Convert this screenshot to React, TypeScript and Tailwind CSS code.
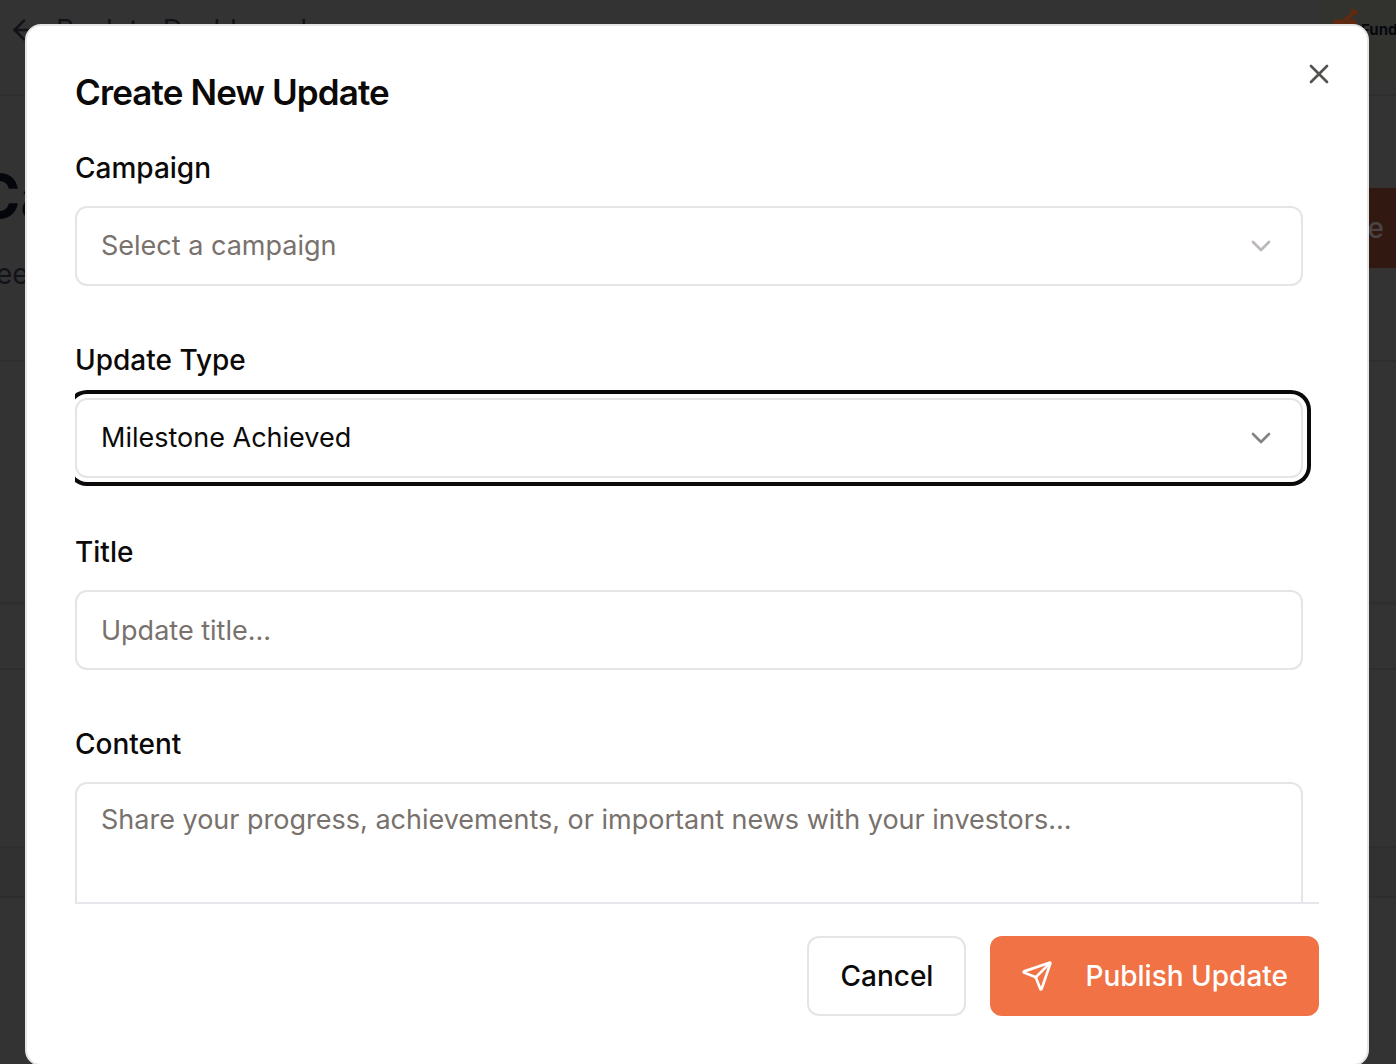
import { useState } from "react";
import type { ReactNode } from "react";
import { ArrowLeft, ChevronDown, Send, X } from "lucide-react";

const fieldClass =
  "w-full rounded-xl border-2 border-[#e5e5e5] bg-white px-6 text-[27px] leading-10 outline-none placeholder:text-[#78716c]";

function Field({ id, label, children }: { id: string; label: string; children: ReactNode }) {
  return (
    <div className="flex flex-col gap-4">
      <label htmlFor={id} className="text-[28px] leading-11 font-medium">
        {label}
      </label>
      {children}
    </div>
  );
}

function PageBehind() {
  return (
    <div aria-hidden="true" className="flex h-screen flex-col overflow-hidden bg-[#333333] text-[#111318]">
      <header className="flex h-24 shrink-0 items-start justify-between border-b-2 border-[#2e2e2e]">
        <div className="flex items-center gap-4 pt-2 pl-2 text-[28px] leading-11">
          <ArrowLeft size={32} />
          <span>Back to Dashboard</span>
        </div>
        <div className="flex h-20 w-[75px] items-start overflow-hidden bg-[#32322f] pt-2 pl-3">
          <svg width="28" height="28" viewBox="0 0 28 28" className="shrink-0" fill="#602a10">
            <path d="M18.5 1.2q1.6-1.4 3 0l3 2.4q1.4 1.6-.4 2.8-1.400.8-2.800.2L13 15l-4-3L18.500 4q-1-1.400 0-2.800z" />
            <path d="M0 13.500q0-2 2-2h7l4 4 4-4h6V24H0z" />
          </svg>
          <span className="text-[15px] leading-11 font-bold text-[#05070c]">Fundraise</span>
        </div>
      </header>
      <div className="flex h-[266px] shrink-0 items-start justify-between border-b-2 border-[#2e2e2e] pt-[68px]">
        <div className="-ml-6">
          <p className="text-[60px] leading-16 font-bold text-[#04060c]">Ca</p>
          <p className="pt-6 pl-5 text-[28px] leading-11">eep</p>
        </div>
        <div className="mt-6 flex h-20 w-40 items-center justify-end bg-[#311810] pr-3 text-[28px] font-medium text-[#484444]">
          Update
        </div>
      </div>
      <div className="h-[243px] shrink-0 border-b-4 border-[#2f2f2f]" />
      <div className="h-[65px] shrink-0 border-b-2 border-[#2e2e2e]" />
      <div className="h-[178px] shrink-0 border-b-2 border-[#2e2e2e]" />
      <div className="h-[50px] shrink-0 border-b-2 border-[#2d2d2d] bg-[#313131]" />
    </div>
  );
}

export default function App() {
  const [campaign, setCampaign] = useState("");
  const [type, setType] = useState("milestone");

  return (
    <div className="relative font-['Inter',sans-serif] text-[#0c0a09] [font-optical-sizing:none]">
      <PageBehind />
      <div className="fixed inset-0 overflow-hidden pt-6 pr-[27px] pl-[25px]">
        <div
          role="dialog"
          aria-labelledby="dialog-title"
          className="relative flex h-[calc(100vh-22px)] flex-col rounded-2xl border-2 border-[#e5e5e5] bg-white p-12"
        >
          <button type="button" aria-label="Close" className="absolute top-8 right-8 text-[#545453]">
            <X size={32} />
          </button>
          <h2 id="dialog-title" className="text-[35px] leading-9 font-semibold tracking-tight">
            Create New Update
          </h2>
          <form className="flex min-h-0 flex-1 flex-col" onSubmit={(e) => e.preventDefault()}>
            <div className="flex min-h-0 flex-1 flex-col gap-[52px] overflow-y-auto pt-9 pr-4 [scrollbar-width:none]">
              <Field id="campaign" label="Campaign">
                <div className="relative">
                  <select
                    id="campaign"
                    value={campaign}
                    onChange={(e) => setCampaign(e.target.value)}
                    className={`${fieldClass} h-20 appearance-none text-[#78716c]`}
                  >
                    <option value="">Select a campaign</option>
                  </select>
                  <ChevronDown size={32} className="pointer-events-none absolute top-6 right-[26px] text-[#bbb8b5]" />
                </div>
              </Field>
              <Field id="update-type" label="Update Type">
                <div className="relative">
                  <select
                    id="update-type"
                    value={type}
                    onChange={(e) => setType(e.target.value)}
                    className={`${fieldClass} h-20 appearance-none ring-4 ring-[#0c0a09] ring-offset-4 ring-offset-white`}
                  >
                    <option value="milestone">Milestone Achieved</option>
                  </select>
                  <ChevronDown size={32} className="pointer-events-none absolute top-6 right-[26px] text-[#858484]" />
                </div>
              </Field>
              <Field id="title" label="Title">
                <input id="title" type="text" placeholder="Update title..." className={`${fieldClass} h-20`} />
              </Field>
              <Field id="content" label="Content">
                <textarea
                  id="content"
                  placeholder="Share your progress, achievements, or important news with your investors..."
                  className={`${fieldClass} h-60 resize-none py-4`}
                />
              </Field>
            </div>
            <div className="flex shrink-0 justify-end gap-6 border-t-2 border-[#e5e7eb] pt-8">
              <button type="button" className="h-20 rounded-xl border-2 border-[#e5e5e5] px-[31px] text-[28px] leading-10 font-medium">
                Cancel
              </button>
              <button
                type="submit"
                className="flex h-20 items-center gap-8 rounded-xl bg-[#f07245] px-[31px] text-[28px] leading-10 font-medium text-white"
              >
                <Send size={32} />
                Publish Update
              </button>
            </div>
          </form>
        </div>
      </div>
    </div>
  );
}
